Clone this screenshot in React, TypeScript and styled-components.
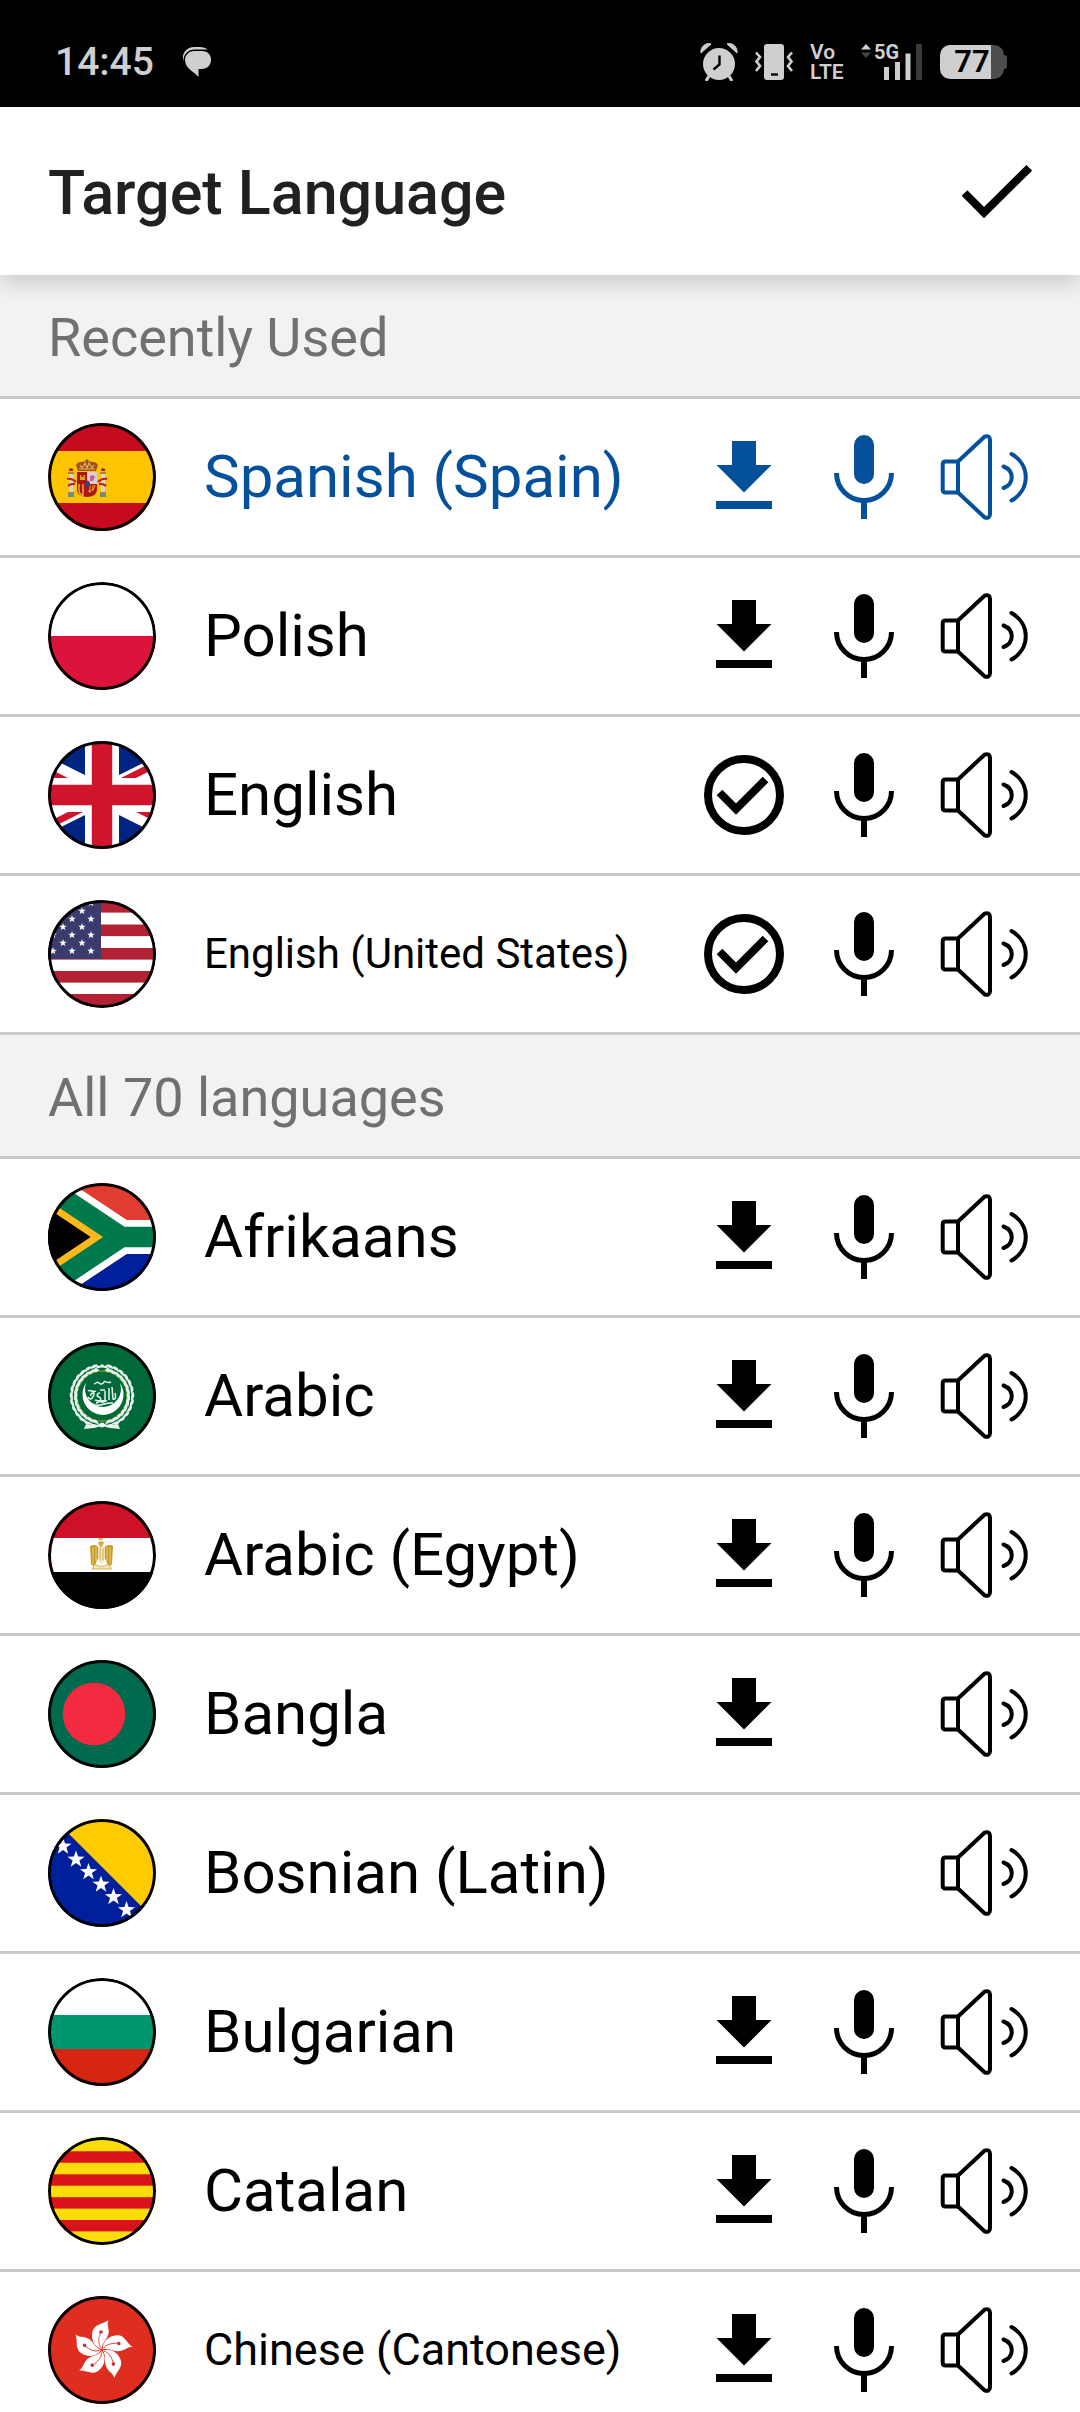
import { ReactNode } from 'react';
import styled, { createGlobalStyle, ThemeProvider } from 'styled-components';

const theme = {
  background: '#ffffff',
  section: '#f2f2f2',
  divider: '#cacaca',
  text: '#000000',
  title: '#212121',
  muted: '#707070',
  accent: '#04509b',
  status: '#cfcfcf',
};

const GlobalStyle = createGlobalStyle`
  * {
    box-sizing: border-box;
  }

  body {
    margin: 0;
    font-family: Roboto, 'Noto Sans', sans-serif;
  }

  button {
    margin: 0;
    padding: 0;
    border: 0;
    background: none;
    color: inherit;
    font: inherit;
    cursor: pointer;
  }

  svg {
    display: block;
    flex: none;
  }
`;

const Screen = styled.div`
  display: flex;
  flex-direction: column;
  height: 100vh;
  background-color: ${(props) => props.theme.background};
  color: ${(props) => props.theme.text};
`;

const StatusBar = styled.div`
  display: flex;
  flex: none;
  align-items: center;
  justify-content: space-between;
  height: 107px;
  padding: 16px 76px 0 55px;
  background-color: #000;
  color: ${(props) => props.theme.status};
`;

const StatusGroup = styled.div<{ $gap: number }>`
  display: flex;
  align-items: center;
  gap: ${(props) => props.$gap}px;
`;

const Clock = styled.span`
  font-size: 39px;
  font-weight: 500;
  line-height: 48px;
`;

const Header = styled.header`
  position: relative;
  z-index: 1;
  display: flex;
  flex: none;
  align-items: center;
  justify-content: space-between;
  height: 168px;
  padding: 0 48px;
  background-color: ${(props) => props.theme.background};
  box-shadow: 0 8px 20px rgba(0, 0, 0, 0.16);
`;

const Title = styled.h1`
  margin: 0;
  padding-top: 4px;
  color: ${(props) => props.theme.title};
  font-size: 61px;
  font-weight: 500;
  line-height: 72px;
`;

const Content = styled.main`
  flex: 1;
  min-height: 0;
  overflow-y: auto;
  scrollbar-width: none;
`;

const SectionTitle = styled.h2`
  margin: 0;
  padding: 31px 48px 26px;
  border-bottom: 3px solid ${(props) => props.theme.divider};
  background-color: ${(props) => props.theme.section};
  color: ${(props) => props.theme.muted};
  font-size: 54px;
  font-weight: 400;
  line-height: 64px;
`;

const List = styled.ul`
  margin: 0;
  padding: 0;
  list-style: none;
`;

const Row = styled.li<{ $selected?: boolean }>`
  display: flex;
  align-items: center;
  height: 159px;
  padding-right: 48px;
  border-bottom: 3px solid ${(props) => props.theme.divider};
  color: ${(props) => (props.$selected ? props.theme.accent : props.theme.text)};
`;

const LanguageButton = styled.button`
  display: flex;
  flex: 1;
  align-items: center;
  gap: 48px;
  min-width: 0;
  height: 100%;
  padding-left: 48px;
  text-align: left;
`;

const LanguageName = styled.span<{ $size: number }>`
  font-size: ${(props) => props.$size}px;
  line-height: 72px;
  white-space: nowrap;
`;

const Actions = styled.div`
  display: grid;
  grid-template-columns: repeat(3, 96px);
  gap: 24px;
  flex: none;
`;

const FlagCircle = styled.svg`
  border-radius: 50%;
`;

/* Flags: drawn on a 108 x 108 square and cut to a circle */

const starPoints = (cx: number, cy: number, r: number) =>
  Array.from({ length: 10 }, (_, i) => {
    const radius = i % 2 ? r * 0.4 : r;
    const angle = (Math.PI / 5) * i - Math.PI / 2;
    return `${(cx + radius * Math.cos(angle)).toFixed(2)},${(cy + radius * Math.sin(angle)).toFixed(2)}`;
  }).join(' ');

const Star = ({ x, y, r }: { x: number; y: number; r: number }) => (
  <polygon points={starPoints(x, y, r)} fill="#fff" />
);

const Bands = ({ stops }: { stops: [number, string][] }) => (
  <>
    {stops.map(([y, color]) => (
      <rect key={y} y={y} width="108" height={108 - y} fill={color} />
    ))}
  </>
);

const Pillar = ({ x, side }: { x: number; side: number }) => (
  <g transform={`translate(${x} 0) scale(${side} 1)`}>
    <rect x="-2" y="51" width="4" height="18" fill="#d9d4c4" />
    <rect x="-3" y="49" width="6" height="2" fill="#a8863a" />
    <path d="M-2 48l0-2 2-1 2 1 0 2z" fill="#b3202a" />
    <rect x="-3" y="69" width="6" height="2" fill="#a8863a" />
    <rect x="-3" y="71" width="6" height="3" fill="#5b8fa8" />
    <path d="M-4 56c4-1 7 1 9 3M-3 63c3-3 5-2 7-2" stroke="#b3202a" strokeWidth="2" fill="none" />
  </g>
);

const SpainFlag = () => (
  <>
    <Bands
      stops={[
        [0, '#c60b1e'],
        [28, '#ffc400'],
        [80, '#c60b1e'],
      ]}
    />
    <Pillar x={23} side={1} />
    <Pillar x={55} side={-1} />
    <path d="M30 48l-2-6c2-4 7-3 11-4 4 1 9 0 11 4l-2 6z" fill="#a3502a" />
    <path d="M31 46h16M32 42l2 3 3-5 2 5 2-5 3 5 2-3" stroke="#e3b64a" strokeWidth="1.2" fill="none" />
    <path d="M39 36v4M37.5 37.5h3" stroke="#7a4a1c" strokeWidth="1" />
    <path d="M29 49h20v17c0 5-4 8-10 8s-10-3-10-8z" fill="#ad1519" />
    <rect x="39" y="49" width="10" height="12" fill="#e4cbd3" />
    <path d="M42 58v-5l3-1 2 2-2 4z" fill="#b26a92" />
    <path d="M32 57v-5h1.5v2h2v-2h1.5v5z" fill="#d9a126" />
    <path d="M31 61v6c0 3 2 5 4 6V61M35 61v13" stroke="#e8b22d" strokeWidth="1.5" fill="none" />
    <path d="M42 62v8M45 62v6M40 68c4 1 6-2 7-6" stroke="#e8b22d" strokeWidth="1" fill="none" />
    <ellipse cx="39" cy="61" rx="2.6" ry="3" fill="#1f4c8c" stroke="#ad1519" />
  </>
);

const PolandFlag = () => (
  <Bands
    stops={[
      [0, '#fff'],
      [54, '#dc143c'],
    ]}
  />
);

const UnitedKingdomFlag = () => (
  <g transform="translate(-48 3) scale(3.4)">
    <clipPath id="uk-saltire">
      <path d="M30 15h30v15zv15H0zH0V0zV0h30z" />
    </clipPath>
    <path d="M0-1v32h60V-1z" fill="#012483" />
    <path d="M0 0l60 30M60 0L0 30" stroke="#fff" strokeWidth="6" />
    <path d="M0 0l60 30M60 0L0 30" clipPath="url(#uk-saltire)" stroke="#cf142b" strokeWidth="4" />
    <path d="M30-1v32M0 15h60" stroke="#fff" strokeWidth="10" />
    <path d="M30-1v32M0 15h60" stroke="#cf142b" strokeWidth="6" />
  </g>
);

const UnitedStatesFlag = () => (
  <>
    <rect width="108" height="108" fill="#fff" />
    {[1, 24.5, 48, 71, 94].map((y) => (
      <rect key={y} y={y} width="108" height="11.6" fill="#b22234" />
    ))}
    <rect width="53" height="59" fill="#3c3b6e" />
    {[3, 19, 35, 51].map((y) => [5, 24, 43].map((x) => <Star key={`${x}-${y}`} x={x} y={y} r={4} />))}
    {[11, 27, 43].map((y) => [15, 34].map((x) => <Star key={`${x}-${y}`} x={x} y={y} r={4} />))}
  </>
);

const SouthAfricaFlag = () => (
  <g transform="translate(-3 3) scale(1.7)">
    <clipPath id="za-triangle">
      <path d="M0 0l45 30L0 60z" />
    </clipPath>
    <rect y="-2" width="90" height="32" fill="#e03c31" />
    <rect y="30" width="90" height="32" fill="#001f9c" />
    <path d="M0 0l45 30h45M0 60l45-30" stroke="#fff" strokeWidth="20" fill="none" />
    <path d="M0 0l45 30L0 60z" fill="#000" />
    <path d="M0 0l45 30L0 60" clipPath="url(#za-triangle)" stroke="#ffb81c" strokeWidth="20" fill="none" />
    <path d="M0 0l45 30h45M0 60l45-30" stroke="#007a4d" strokeWidth="12" fill="none" />
  </g>
);

const ArabLeagueFlag = () => (
  <>
    <rect width="108" height="108" fill="#00693a" />
    <circle cx="54" cy="54" r="25" stroke="#5e9a2c" strokeWidth="1.5" fill="none" />
    {Array.from({ length: 26 }, (_, i) => {
      const side = i < 13 ? 1 : -1;
      const angle = 14 + (i % 13) * 12.5;
      return (
        <g key={i} transform={`translate(54 54) scale(${side} 1) rotate(${angle}) translate(0 -29)`}>
          <path d="M5 0C2-4-1-4-4-2c2 2 5 2 9 2zM5 1C2 5-1 5-4 3c2-2 5-2 9-2z" fill="#e9f2ec" />
        </g>
      );
    })}
    <path d="M48 23l3 2 3-2 3 2 3-2M47 27c4-3 10-3 14 0" stroke="#e9f2ec" strokeWidth="1.5" fill="none" />
    <path d="M38 82l8 2 8-3 8 3 8-2 2 5-10-1-8-2-8 2-10 1z" fill="#e9f2ec" />
    <circle cx="54" cy="83" r="2.5" fill="#e9f2ec" />
    <path d="M38 41A20.5 20.5 0 1 0 72 41A18 18 0 1 1 38 41z" fill="#fff" />
    <path
      d="M46 42c3-1 3-3 5-1s4 1 5-1 3 2 7 0M40 49c3-2 5 2 8 0M52 48h5M61 46v12M64 45l1 12c3 1 3-3 2-6M57 49v9c0 3-5 3-5 0M52 51c-3 0-4 3-1 4s2 5-3 6M40 55c3 5 6-1 6-3s-4-1-3 2M45 62c6 4 12-2 20-1M47 58c5 2 8 0 12 1"
      stroke="#e9f2ec"
      strokeWidth="1.5"
      fill="none"
    />
  </>
);

const EgyptFlag = () => (
  <>
    <Bands
      stops={[
        [0, '#ce1126'],
        [37, '#fff'],
        [71, '#000'],
      ]}
    />
    <path d="M50 39l1-2h4l-1 2zM50 42c1-2 4-3 6 0l-2 4h-2z" fill="#d3b24c" />
    <path d="M42 45c4-2 8-1 9 3v7l-4 9c-2 1-3 1-4-1zM65 45c-4-2-8-1-9 3v7l4 9c2 1 3 1 4-1z" fill="#c79a22" />
    <path d="M45 46v17M48 46v14M59 46v14M62 46v17" stroke="#e6cf8a" strokeWidth="1" />
    <path d="M50 46h7v12l-3 5h-1l-3-5z" fill="#f0e3bd" />
    <path d="M52 47v12M55 47v12" stroke="#d3b24c" strokeWidth="1" />
    <path d="M47 63c4 3 9 3 13 0l4 5H44z" fill="#f0e3bd" stroke="#d3b24c" strokeWidth="1" />
  </>
);

const BangladeshFlag = () => (
  <>
    <rect width="108" height="108" fill="#006a4e" />
    <circle cx="46" cy="54" r="31.3" fill="#f42a41" />
  </>
);

const BosniaFlag = () => (
  <>
    <rect width="108" height="108" fill="#001f9c" />
    <path d="M6 0h102v102z" fill="#fecb00" />
    {[2, 15, 28, 40.5, 53, 65.5, 78.5].map((x) => (
      <Star key={x} x={x} y={x + 12.5} r={9} />
    ))}
  </>
);

const BulgariaFlag = () => (
  <Bands
    stops={[
      [0, '#fff'],
      [37, '#00966e'],
      [71, '#d62612'],
    ]}
  />
);

const CataloniaFlag = () => (
  <>
    <rect width="108" height="108" fill="#fcdd09" />
    {[14.3, 37.3, 60.2, 83].map((y) => (
      <rect key={y} y={y} width="108" height="11.4" fill="#da121a" />
    ))}
  </>
);

const HongKongFlag = () => (
  <>
    <rect width="108" height="108" fill="#df2d1f" />
    {[0, 72, 144, 216, 288].map((angle) => (
      <g key={angle} transform={`rotate(${angle} 54 54)`}>
        <path
          d="M53.5 53C46 51 42.500 43 44.500 35.500C46.500 27.500 55 28.500 60.700 24C58.500 28 61 31 60.700 36C60.300 43 54.500 45 53.500 53z"
          fill="#fff"
        />
        <path d="M53 52C50 48 50 42 53 36" stroke="#df2d1f" strokeWidth="0.8" fill="none" />
        <circle cx="53" cy="36" r="1.8" fill="#c8333a" />
      </g>
    ))}
  </>
);

const Flag = ({ children }: { children: ReactNode }) => (
  <FlagCircle width="108" height="108" viewBox="0 0 108 108" aria-hidden="true">
    {children}
    <circle cx="54" cy="54" r="52.5" fill="none" stroke="#000" strokeWidth="3" />
  </FlagCircle>
);

/* Row icons */

const DownloadIcon = () => (
  <svg width="96" height="96" viewBox="0 0 96 96" fill="currentColor" aria-hidden="true">
    <path d="M36 12h24v24h15.5L48 63.5 20.5 36H36zM20 72h56v8H20z" />
  </svg>
);

const DownloadedIcon = () => (
  <svg
    width="96"
    height="96"
    viewBox="0 0 96 96"
    fill="none"
    stroke="currentColor"
    strokeWidth="8"
    role="img"
    aria-label="Downloaded"
  >
    <circle cx="48" cy="48" r="36" />
    <path d="M23.5 45.5l16.5 16.5 29.5-29.5" />
  </svg>
);

const MicIcon = () => (
  <svg width="96" height="96" viewBox="0 0 96 96" fill="currentColor" role="img" aria-label="Voice input">
    <rect x="38" y="6" width="20" height="49" rx="10" />
    <path d="M20.5 44a27.5 27.5 0 0 0 55 0" stroke="currentColor" strokeWidth="5" fill="none" />
    <path d="M45 72h6v18h-6z" />
  </svg>
);

const SpeakerIcon = () => (
  <svg
    width="96"
    height="96"
    viewBox="0 0 96 96"
    fill="none"
    stroke="currentColor"
    strokeWidth="4"
    strokeLinecap="round"
    strokeLinejoin="round"
    role="img"
    aria-label="Voice output"
  >
    <path d="M22 32.5H9.500q-2.800 0-2.800 3v25q0 3 2.800 3H22z" />
    <path d="M22 32.500L48.500 7.700q5-2 5.500 3V85.300q-.5 5-5.500 3L22 63.500" />
    <path d="M67.5 37.500c11 4 11 17.500 0 21.500" />
    <path d="M75.500 25c19 10.500 19 36 0 46.500" />
  </svg>
);

const CheckIcon = () => (
  <svg width="72" height="56" viewBox="0 0 72 56" fill="none" stroke="#000" strokeWidth="8" aria-hidden="true">
    <path d="M4.5 30l19.5 19.5L69.3 4.8" />
  </svg>
);

/* Status bar icons */

const MessageIcon = () => (
  <svg width="30" height="30" viewBox="0 0 30 30" fill="currentColor" role="img" aria-label="New messages">
    <path d="M1.5 14C-1 6 5 0 12 0h6c3 0 6 1 7.5 2.5H13C6 2.5 1.5 7 1.5 14z" />
    <path d="M12 4h8c6 0 9 4 9 9s-4 9-9 9h-3.5v8C13 25 3 22 3 13c0-5 4-9 9-9z" />
  </svg>
);

const AlarmIcon = () => (
  <svg width="38" height="38" viewBox="0 0 38 38" fill="currentColor" role="img" aria-label="Alarm set">
    <circle cx="19" cy="21" r="16" />
    <path d="M1 10C0 4 6-1 11 1zM37 10C38 4 32-1 27 1z" stroke="currentColor" strokeLinejoin="round" />
    <path d="M9 33l-3 5M29 33l3 5" stroke="currentColor" strokeWidth="3" />
    <path d="M19.5 12.5v9l-6 5" stroke="#000" strokeWidth="2.4" fill="none" />
  </svg>
);

const VibrateIcon = () => (
  <svg width="38" height="38" viewBox="0 0 38 38" fill="currentColor" role="img" aria-label="Vibrate">
    <rect x="9" y="1" width="20" height="36" rx="3" />
    <path d="M16 31.5h7" stroke="#000" strokeWidth="2.4" />
    <path
      d="M1 9.5l4 4.5-3.5 4.5L5 23l-4 5M37 9.5L33 14l3.500 4.500L33 23l4 5"
      stroke="currentColor"
      strokeWidth="2.6"
      fill="none"
    />
  </svg>
);

const SignalGraphic = styled.svg`
  overflow: visible;
`;

const SignalIcon = () => (
  <SignalGraphic width="62" height="38" viewBox="0 0 62 38" fill="currentColor" role="img" aria-label="5G signal">
    <path d="M0 6.5L5 1l5 5.5z" />
    <path d="M0 9.5L5 15l5-5.5z" fill="#444" />
    <text x="13" y="16" fontSize="20" fontWeight="700">
      5G
    </text>
    <path d="M23 24h5v13h-5zM34 19h5v18h-5zM44.5 10.5h5v26.5h-5z" />
    <path d="M55 1h6v36h-6z" fill="#3a3a3a" />
  </SignalGraphic>
);

const VolteLabel = styled.span`
  width: 34px;
  font-size: 21px;
  font-weight: 600;
  line-height: 20px;
`;

const Battery = styled.span`
  position: relative;
  display: flex;
  align-items: center;
  justify-content: center;
  width: 64px;
  height: 34px;
  border-radius: 10px;
  background: linear-gradient(to right, ${(props) => props.theme.status} 51px, #4d4d4d 51px);
  color: #000;
  font-size: 31px;
  font-weight: 600;
  line-height: 34px;

  &::after {
    position: absolute;
    top: 10px;
    right: -3px;
    width: 3px;
    height: 14px;
    border-radius: 0 3px 3px 0;
    background: #4d4d4d;
    content: '';
  }
`;

interface Language {
  name: string;
  flag: ReactNode;
  download?: 'available' | 'done';
  mic?: boolean;
  size?: number;
  selected?: boolean;
}

const recentLanguages: Language[] = [
  { name: 'Spanish (Spain)', flag: <SpainFlag />, download: 'available', mic: true, selected: true },
  { name: 'Polish', flag: <PolandFlag />, download: 'available', mic: true },
  { name: 'English', flag: <UnitedKingdomFlag />, download: 'done', mic: true },
  { name: 'English (United States)', flag: <UnitedStatesFlag />, download: 'done', mic: true, size: 42 },
];

const allLanguages: Language[] = [
  { name: 'Afrikaans', flag: <SouthAfricaFlag />, download: 'available', mic: true },
  { name: 'Arabic', flag: <ArabLeagueFlag />, download: 'available', mic: true },
  { name: 'Arabic (Egypt)', flag: <EgyptFlag />, download: 'available', mic: true },
  { name: 'Bangla', flag: <BangladeshFlag />, download: 'available' },
  { name: 'Bosnian (Latin)', flag: <BosniaFlag /> },
  { name: 'Bulgarian', flag: <BulgariaFlag />, download: 'available', mic: true },
  { name: 'Catalan', flag: <CataloniaFlag />, download: 'available', mic: true },
  { name: 'Chinese (Cantonese)', flag: <HongKongFlag />, download: 'available', mic: true, size: 45 },
];

const LanguageRow = ({ name, flag, download, mic, size = 60, selected }: Language) => (
  <Row $selected={selected}>
    <LanguageButton type="button" aria-pressed={!!selected}>
      <Flag>{flag}</Flag>
      <LanguageName $size={size}>{name}</LanguageName>
    </LanguageButton>
    <Actions>
      {download === 'available' && (
        <button type="button" aria-label={`Download ${name}`}>
          <DownloadIcon />
        </button>
      )}
      {download === 'done' && <DownloadedIcon />}
      {!download && <span />}
      {mic ? <MicIcon /> : <span />}
      <SpeakerIcon />
    </Actions>
  </Row>
);

export default function App() {
  return (
    <ThemeProvider theme={theme}>
      <GlobalStyle />
      <Screen>
        <StatusBar>
          <StatusGroup $gap={28}>
            <Clock>14:45</Clock>
            <MessageIcon />
          </StatusGroup>
          <StatusGroup $gap={17}>
            <AlarmIcon />
            <VibrateIcon />
            <VolteLabel>
              Vo
              <br />
              LTE
            </VolteLabel>
            <SignalIcon />
            <Battery>77</Battery>
          </StatusGroup>
        </StatusBar>
        <Header>
          <Title>Target Language</Title>
          <button type="button" aria-label="Confirm">
            <CheckIcon />
          </button>
        </Header>
        <Content>
          <SectionTitle>Recently Used</SectionTitle>
          <List>
            {recentLanguages.map((language) => (
              <LanguageRow key={language.name} {...language} />
            ))}
          </List>
          <SectionTitle>All 70 languages</SectionTitle>
          <List>
            {allLanguages.map((language) => (
              <LanguageRow key={language.name} {...language} />
            ))}
          </List>
        </Content>
      </Screen>
    </ThemeProvider>
  );
}
